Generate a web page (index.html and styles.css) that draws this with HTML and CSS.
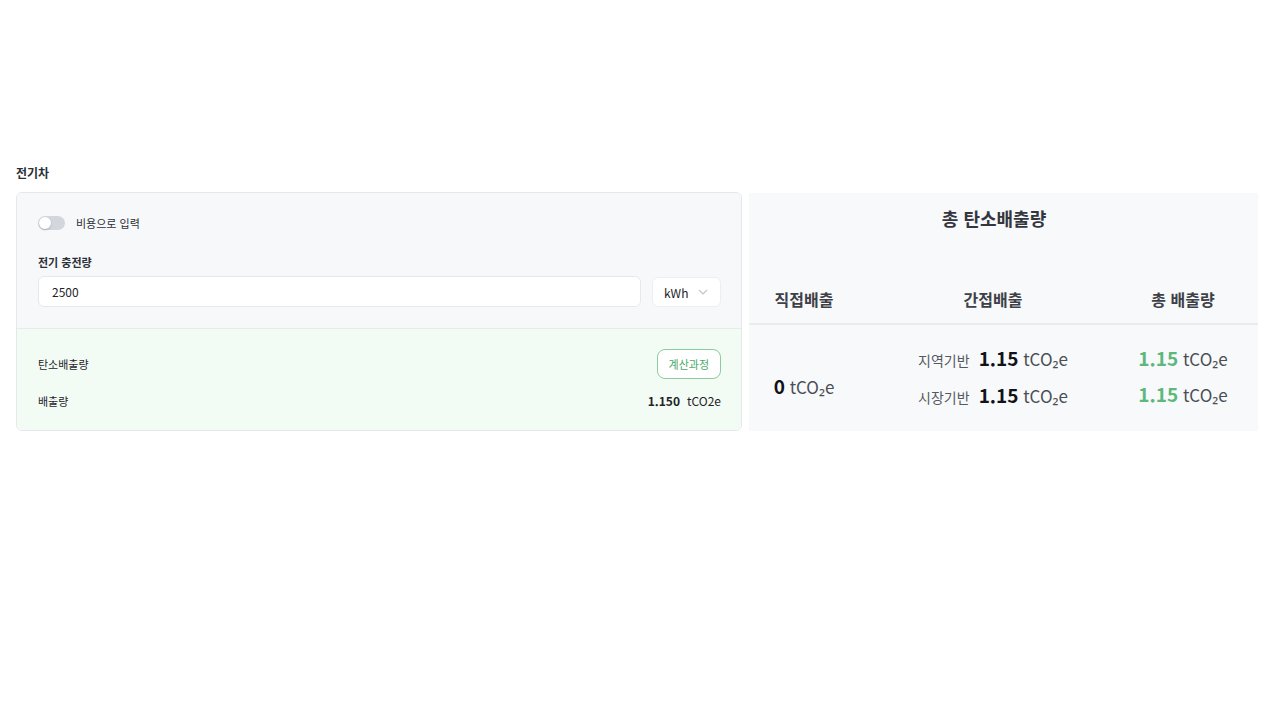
FILE: index.html
```html
<!DOCTYPE html>
<html lang="ko">
<head>
    <meta charset="UTF-8">
    <meta name="viewport" content="width=device-width, initial-scale=1.0">
    <title>전기차</title>
    <link rel="stylesheet" href="styles.css">
</head>
<body>
    <section class="ev-section">
        <h3 class="section-title">전기차</h3>
        <div class="ev-row">
            <div class="input-card">
                <div class="input-top">
                    <label class="toggle-row">
                        <span class="toggle"><span class="knob"></span></span>
                        <span class="toggle-label">비용으로 입력</span>
                    </label>
                    <div class="field-label">전기 충전량</div>
                    <div class="field-row">
                        <div class="text-input">2500</div>
                        <div class="unit-select">
                            <span>kWh</span>
                            <svg width="10" height="6" viewBox="0 0 10 6"><path d="M1 1l4 4 4-4" fill="none" stroke="#c0c4cc" stroke-width="1.1"/></svg>
                        </div>
                    </div>
                </div>
                <div class="result-box">
                    <div class="result-row">
                        <span>탄소배출량</span>
                        <button class="calc-btn">계산과정</button>
                    </div>
                    <div class="result-row small">
                        <span>배출량</span>
                        <span class="result-value"><b>1.150</b>tCO2e</span>
                    </div>
                </div>
            </div>

            <div class="summary">
                <h2 class="summary-title">총 탄소배출량</h2>
                <div class="summary-grid head">
                    <div>직접배출</div>
                    <div>간접배출</div>
                    <div>총 배출량</div>
                </div>
                <div class="summary-grid body">
                    <div class="col-direct"><b>0</b> tCO₂e</div>
                    <div class="col-indirect">
                        <div class="line"><span class="base">지역기반</span><b>1.15</b> tCO₂e</div>
                        <div class="line"><span class="base">시장기반</span><b>1.15</b> tCO₂e</div>
                    </div>
                    <div class="col-total">
                        <div class="line"><b>1.15</b> tCO₂e</div>
                        <div class="line"><b>1.15</b> tCO₂e</div>
                    </div>
                </div>
            </div>
        </div>
    </section>
</body>
</html>
```

FILE: styles.css
```css
* {
    margin: 0;
    padding: 0;
    box-sizing: border-box;
}

body {
    background: #ffffff;
    font-family: "Noto Sans CJK KR", "Noto Sans", sans-serif;
    color: #1f2329;
}

.ev-section {
    padding: 164px 22px 0 16px;
}

.section-title {
    font-size: 12px;
    font-weight: 700;
    line-height: 18px;
    color: #2b2f36;
    margin-bottom: 10px;
}

.ev-row {
    display: flex;
    align-items: flex-start;
    gap: 7px;
}

/* 입력 카드 */
.input-card {
    width: 726px;
    border: 1px solid #e4e7ec;
    border-radius: 6px;
    overflow: hidden;
}

.input-top {
    background: #f7f8fa;
    padding: 20px 20px 21px 21px;
}

.toggle-row {
    display: flex;
    align-items: center;
    gap: 11px;
    height: 20px;
}

.toggle {
    position: relative;
    width: 27px;
    height: 14px;
    border-radius: 7px;
    background: #d3d6dc;
}

.knob {
    position: absolute;
    left: 1px;
    top: 1px;
    width: 12px;
    height: 12px;
    border-radius: 50%;
    background: #fff;
    box-shadow: 0 1px 2px rgba(0, 0, 0, 0.2);
}

.toggle-label {
    font-size: 11px;
    color: #2b2f36;
}

.field-label {
    margin-top: 20px;
    margin-bottom: 5px;
    font-size: 11px;
    font-weight: 700;
    line-height: 18px;
    color: #2b2f36;
}

.field-row {
    display: flex;
    gap: 11px;
}

.text-input {
    flex: 1;
    height: 31px;
    background: #fff;
    border: 1px solid #e6e8eb;
    border-radius: 6px;
    padding: 0 13px;
    display: flex;
    align-items: center;
    font-size: 12px;
    color: #1f2329;
}

.unit-select {
    width: 69px;
    height: 30px;
    margin-top: 1px;
    background: #fff;
    border: 1px solid #eceef1;
    border-radius: 6px;
    display: flex;
    align-items: center;
    justify-content: space-between;
    padding: 0 12px 0 11px;
    font-size: 12px;
    color: #1f2329;
}

.result-box {
    background: #f3fcf4;
    border-top: 1px solid #e6ece8;
    padding: 20px 20px 20px 21px;
}

.result-row {
    display: flex;
    justify-content: space-between;
    align-items: center;
    font-size: 11px;
    color: #1f2329;
}

.result-row.small {
    margin-top: 13px;
    line-height: 18px;
}

.calc-btn {
    height: 30px;
    padding: 0 11px;
    border: 1px solid #8ccb9e;
    border-radius: 8px;
    background: #fff;
    color: #4aa867;
    font-family: inherit;
    font-size: 11px;
}

.result-value {
    font-size: 12px;
}

.result-value b {
    font-weight: 700;
    margin-right: 7px;
}

/* 총 탄소배출량 */
.summary {
    width: 509px;
    margin-top: 1px;
    background: #f8f9fb;
    text-align: center;
}

.summary-title {
    padding: 12px 19px 0 0;
    font-size: 18px;
    line-height: 26px;
    font-weight: 700;
    color: #33373d;
}

.summary-grid {
    display: grid;
    grid-template-columns: 110px 268px 112px;
}

.summary-grid.head {
    margin-top: 56px;
    padding-bottom: 12px;
    border-bottom: 2px solid #eaecef;
    font-size: 16px;
    font-weight: 700;
    line-height: 24px;
    color: #3d4147;
}

.summary-grid.body {
    padding: 20px 0 21px;
    font-size: 17px;
    color: #4a4e55;
}

.summary-grid.body b {
    font-size: 19px;
    font-weight: 700;
    color: #111318;
}

.col-direct {
    align-self: center;
    margin-top: 16px;
}

.line {
    line-height: 26px;
}

.line + .line {
    margin-top: 9px;
}

.base {
    font-size: 14px;
    color: #55595f;
    margin-right: 9px;
}

.col-total b {
    color: #5cb87b !important;
}
```
